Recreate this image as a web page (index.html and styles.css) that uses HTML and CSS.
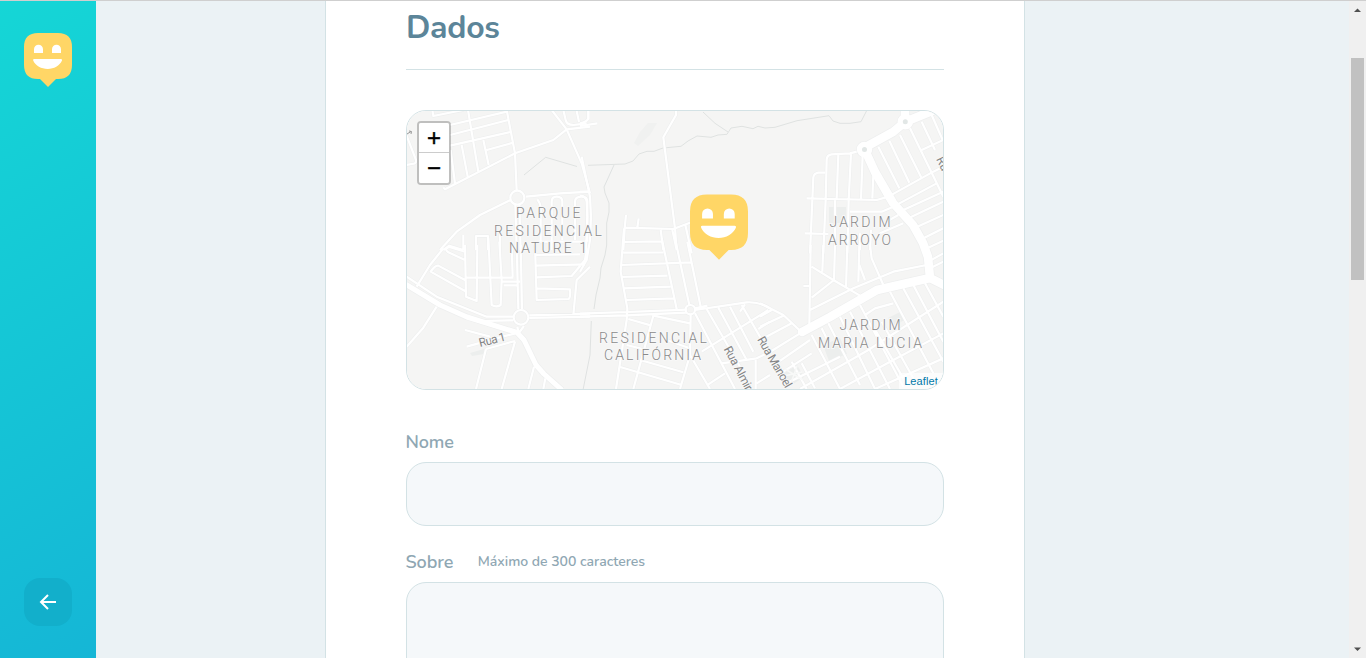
FILE: index.html
```html
<!DOCTYPE html>
<html lang="pt-BR">
<head>
<meta charset="utf-8">
<title>Dados</title>
<link rel="stylesheet" href="styles.css">
</head>
<body>
<div class="app">
  <aside class="sidebar">
    <svg class="logo" width="48" height="54" viewBox="0 0 48 54">
      <path class="pin" d="M14 0H34Q48 0 48 14V32Q48 46 34 46H32L24 54L16 46H14Q0 46 0 32V14Q0 0 14 0Z"/>
      <path class="face" d="M10 20V16.200a4.500 4.500 0 0 1 9 0V20ZM28 20V16.200a4.500 4.500 0 0 1 9 0V20ZM10 26H37Q38.500 26 38 27.600C35.500 33 30 36 23.700 36S11.500 33 9.200 27.600Q8.600 26 10 26Z"/>
    </svg>
    <button class="back" type="button" aria-label="Voltar">
      <svg width="24" height="24" viewBox="0 0 24 24"><path d="M20 12H5M12 19L5 12L12 5"/></svg>
    </button>
  </aside>
  <main class="content">
    <form class="form">
      <h2 class="legend">Dados</h2>
      <div class="map">
        <svg class="map-art" width="536" height="278" viewBox="407 111 536 278">
          <defs>
            <g id="minor">
              <g transform="translate(400 100) scale(.33333)">
                <path d="M97 30L100 48L190 30M150 75L320 35M150 105L325 60M150 137L335 95M260 150L340 128M204 30L235 215M320 30L345 160L350 270M152 150L165 250M185 135L203 230M250 120L266 195M130 262L135 268L345 160L460 120L500 88L570 80M455 30L500 88L545 190L570 280M490 30L497 60Q500 75 520 75L560 70M530 33L537 66M565 30L565 60M15 95L48 180Q50 192 35 192L20 195M378 290L480 280L570 275M332 300L240 345L170 395L120 450M346 315L350 450M358 315L362 450M412 298Q422 310 422 325V425M455 450V305Q455 290 470 290Q487 290 487 305V420M525 420V305Q525 290 545 290Q562 290 562 305V425M405 425H540M190 405V450M228 450V408H264V450M300 400V450M130 450L148 437L190 450"/>
                <circle cx="352" cy="293" r="21"/>
              </g>
              <g transform="translate(400 245) scale(.33333)">
                <path d="M130 10L90 60L50 125M195 45L145 22Q130 12 148 6L195 20M195 105L115 62Q105 60 92 80L195 138M195 0L198 155L230 168L232 0M265 -20L275 180Q290 188 302 180L305 105L298 -10M335 0L338 95M195 98L340 98M305 110H360M312 121H352M350 0L355 192M362 0L366 192M405 0L410 165L505 162Q512 160 510 133L410 130M405 62L555 58M408 97L515 93L555 45M405 30L540 28M560 10L555 45M570 65L530 105L520 210M20 95L110 155L260 215H340M255 228L340 226M388 211L570 206M388 219L570 215M352 245L356 265M372 243L358 262M110 185L70 248L20 305M195 255L270 275M200 305L345 265M258 312L345 288M258 312L228 432M345 290L305 432M402 365L385 432M436 400L430 432"/>
                <circle cx="363" cy="217" r="22"/>
              </g>
              <g transform="translate(580 100) scale(.33333)">
                <path d="M25 30V55Q22 65 0 70M0 78L52 70M288 30V45L250 112L285 385L290 450M138 345L134 385L130 450M176 355L172 383M134 383L280 387L330 368M130 426L248 424M242 390L250 450M277 390L290 450M316 375L335 460M5 170L30 290L33 350L30 420L20 480L0 515M0 275H25M0 287Q18 288 20 305L22 350L18 450M0 425H20"/>
              </g>
              <g transform="translate(580 245) scale(.33333)">
                <path d="M132 -50L122 80L142 190L140 225L108 432M130 23L250 22M125 60L335 52M122 96L262 92M130 130L272 125M140 165L282 160M245 -20L290 192M285 -20L328 180M322 -10L362 185M0 206L140 201L320 194M0 215L140 211L320 203M345 195L500 172Q540 170 570 190M345 190L382 182M145 222L215 242M220 212L330 235M140 300L200 315M220 212L160 432M118 365L305 420M180 345L310 382M260 285L325 308M332 208L330 330L300 432M345 205L465 432M330 330L390 432M380 192L500 400M415 188L500 345M450 185L520 320M485 180L560 310M365 320L565 195M385 418L435 385M425 355L530 340L570 320M527 345V432M530 415L570 390M535 252L570 230M480 200L495 178"/>
                <circle cx="331" cy="194" r="14"/>
              </g>
              <g transform="translate(760 100) scale(.33333)">
                <path d="M290 155L270 160L215 163Q200 165 200 180L197 300L190 460M235 163L230 295M273 160L266 300L262 460M308 165L303 297M340 225L337 295M140 295L350 300L385 290L520 215L550 200M195 218H175Q162 220 160 232L150 460M270 335H365L400 320L530 250M135 400L205 402M355 140L418 265M388 122L448 248M420 105L485 235M450 85L550 290M485 65L525 150M515 45L548 120M485 150L550 120M430 330L550 275M445 355L550 305M462 385L550 345M480 420L550 385M490 450L550 422M360 400L430 370M380 365L415 345M300 400V450M333 390L330 450M225 300V450"/>
              </g>
              <g transform="translate(760 245) scale(.33333)">
                <path d="M152 0L148 240M130 123H150M155 65L220 105L300 152M190 0L187 80M225 0L222 105L155 158M262 0L258 130M298 0L295 110M330 0L335 40L370 120M150 195L280 130L400 80L500 60M298 60L315 105M0 175L70 210L125 262M0 215L35 195M0 245L70 212M0 285L95 235M15 330L125 262M35 365L150 285M70 380L155 325M155 270L240 432M205 235L300 420M240 215L345 432M270 200L390 432M300 180L430 425M340 245L430 400M365 230L460 400M390 140L520 385M430 130L550 350M460 120L550 290M495 115L550 215M315 210L345 190L400 175M120 432L320 318L550 170M80 415L240 335M240 432L400 345L550 265M345 432L550 340M125 355L165 430M95 350L140 432M505 50L550 25M510 70L550 50M185 250L205 290"/>
              </g>
            </g>
            <g id="major">
              <path d="M406 284.500L440 305L467 317L517 332.500L524 340L536 365L544 374L562 390"/>
            </g>
            <g id="avenue">
              <path d="M905 110V121M932 111L905 122L893 132L864 148L875 172L893 203L913 225L923 243L928 257L930 278L944 285M930 278L877 290L830 317L802 332"/>
              <circle cx="864.500" cy="149.500" r="3.500"/>
              <circle cx="905.300" cy="121.700" r="3.500"/>
            </g>
          </defs>
          <rect class="land" x="406" y="110" width="538" height="280"/>
          <path class="park" d="M829 207H846V223H829ZM823 345L840 338L847 354L829 361ZM888 318L900 312L904 320L893 327ZM783 374L797 365L804 377L790 386ZM470 353L484 349V354L472 356Z"/>
          <path class="lake" d="M634 143L640 132L648 123H657L650 135L638 146Z"/>
          <g class="trail">
            <path d="M524 175L545.700 157.300L577 166.500M588 165.300L625 164L633 161L639 154L647 151.300H654L663 148L681 146.300L688 141L697 136L711 137.300L718 135L727 134.300L731 128L742 126.300L753 128.700L758 126.300L765 128L775 127.300L797 120.700L829 115.700L833 121L840 123.300H850L861 121.700L867 110M703 112L715 123.300L728 132M614 165L604 187L605 193L609 203V212L606.700 223V245L605 255L601 268L600 278L596 295L594 309M591.300 321L590 355L583 390"/>
          </g>
          <use class="minor-case" href="#minor"/>
          <use class="major-case" href="#major"/>
          <use class="avenue-case" href="#avenue"/>
          <use class="minor-fill" href="#minor"/>
          <use class="major-fill" href="#major"/>
          <use class="avenue-fill" href="#avenue"/>
          <path class="plaza" d="M785 369L803 380M797 366L790 386M784 376L802 372"/>
          <circle class="dot" cx="864.500" cy="149.500" r="2.500"/>
          <circle class="dot" cx="905.300" cy="121.700" r="2.500"/>
          <g class="district">
            <text x="516" y="218" textLength="66.500">PARQUE</text>
            <text x="494" y="235.500" textLength="110">RESIDENCIAL</text>
            <text x="509" y="253" textLength="80">NATURE 1</text>
            <text x="829.500" y="227" textLength="63">JARDIM</text>
            <text x="828" y="244.500" textLength="65">ARROYO</text>
            <text x="599" y="342.500" textLength="110">RESIDENCIAL</text>
            <text x="604" y="360" textLength="99">CALIFÓRNIA</text>
            <text x="839.500" y="330" textLength="63">JARDIM</text>
            <text x="818" y="347.500" textLength="106">MARIA LUCIA</text>
          </g>
          <g class="street">
            <text transform="translate(480 347) rotate(-14)" textLength="27">Rua 1</text>
            <text transform="translate(723.500 349) rotate(62)" textLength="48">Rua Almir</text>
            <text transform="translate(757 339.500) rotate(60)" textLength="57">Rua Manoel</text>
            <text transform="translate(936 159) rotate(64)">Ru</text>
          </g>
          <path class="mark" d="M407 134L411 131.500M409 131L411.500 131.500L411 134"/>
        </svg>
        <svg class="marker" width="58" height="66" viewBox="0 0 48 54">
          <path class="pin" d="M14 0H34Q48 0 48 14V32Q48 46 34 46H32L24 54L16 46H14Q0 46 0 32V14Q0 0 14 0Z"/>
          <path class="face" d="M10 20V16.200a4.500 4.500 0 0 1 9 0V20ZM28 20V16.200a4.500 4.500 0 0 1 9 0V20ZM10 26H37Q38.500 26 38 27.600C35.500 33 30 36 23.700 36S11.500 33 9.200 27.600Q8.600 26 10 26Z"/>
        </svg>
        <div class="zoom">
          <a class="zoom-btn">+</a>
          <a class="zoom-btn">−</a>
        </div>
        <div class="attribution">Leaflet</div>
      </div>
      <div class="field">
        <label class="label" for="name"><span>Nome</span></label>
        <input class="input" id="name">
      </div>
      <div class="field">
        <label class="label" for="about"><span>Sobre</span><span class="hint">Máximo de 300 caracteres</span></label>
        <textarea class="input area" id="about"></textarea>
      </div>
    </form>
  </main>
  <div class="scrollbar">
    <svg width="17" height="17" viewBox="0 0 17 17"><path d="M5 11L8.500 7.500L12 11Z"/></svg>
    <div class="thumb"></div>
    <svg class="down" width="17" height="17" viewBox="0 0 17 17"><path d="M5 6.500L8.500 10L12 6.500Z"/></svg>
  </div>
</div>
</body>
</html>
```
FILE: styles.css
```css
* { box-sizing: border-box; margin: 0; padding: 0; }
body {
  height: 658px;
  overflow: hidden;
  background: #ebf2f5;
  font-family: Nunito, Lato, sans-serif;
}
.app {
  display: flex;
  height: 658px;
  border-top: 1px solid #cfcfcf;
  overflow: hidden;
}
.sidebar {
  width: 96px;
  padding: 32px 24px;
  display: flex;
  flex-direction: column;
  align-items: center;
  justify-content: space-between;
  background: linear-gradient(329.540deg, #15b6d6 0%, #15d6d6 100%);
}
.pin { fill: #ffd666; }
.face { fill: #fff; }
.back {
  width: 48px;
  height: 48px;
  border: 0;
  border-radius: 16px;
  background: #12afcb;
  display: flex;
  align-items: center;
  justify-content: center;
}
.back path { fill: none; stroke: #fff; stroke-width: 2; }
.content { flex: 1; display: flex; padding-left: 229px; }
.form {
  width: 700px;
  height: 760px;
  padding: 0 80px;
  background: #fff;
  border: 1px solid #d3e2e5;
  border-width: 0 1px;
}
.legend {
  height: 69px;
  padding-top: 6px;
  border-bottom: 1px solid #d3e2e5;
  font-size: 32px;
  line-height: 42px;
  font-weight: 700;
  letter-spacing: -.3px;
  color: #5c8599;
}
.map {
  position: relative;
  height: 280px;
  margin-top: 40px;
  border: 1px solid #d3e2e5;
  border-radius: 20px;
  overflow: hidden;
}
.map-art { display: block; }
.land { fill: #f5f5f4; }
.park { fill: #eceeed; }
.lake { fill: #f0f1f0; }
.plaza { fill: none; stroke: #f8f9f8; stroke-width: 1.5; }
.trail { fill: none; stroke: #dfe2e1; stroke-width: 1; }
.minor-case, .minor-fill, .major-case, .major-fill, .avenue-case, .avenue-fill { fill: none; stroke-linejoin: round; }
.minor-case { stroke: #eeefef; stroke-width: 10; }
.minor-fill { stroke: #fff; stroke-width: 6.500; }
.major-case { stroke: #eeefef; stroke-width: 6.500; }
.major-fill { stroke: #fff; stroke-width: 5; }
.avenue-case { stroke: #eeefef; stroke-width: 10; stroke-linecap: round; }
.avenue-fill { stroke: #fff; stroke-width: 8.500; stroke-linecap: round; }
.dot { fill: #e2e7e6; }
.district text {
  font: 300 14px Roboto, sans-serif;
  letter-spacing: 2px;
  fill: #8a8a8a;
  stroke: #f8f8f8;
  stroke-width: 2;
  paint-order: stroke;
}
.street text {
  font: 400 12px Roboto, sans-serif;
  fill: #858585;
  stroke: #f8f8f8;
  stroke-width: 2;
  paint-order: stroke;
}
.mark { fill: none; stroke: #999; }
.marker { position: absolute; left: 283px; top: 83px; }
.zoom {
  position: absolute;
  left: 10px;
  top: 10px;
  border: 2px solid rgba(0, 0, 0, .22);
  border-radius: 4px;
  background-clip: padding-box;
  overflow: hidden;
}
.zoom-btn {
  display: block;
  width: 30px;
  height: 30px;
  background: #fff;
  font: 24px/29px "Liberation Sans", sans-serif;
  -webkit-text-stroke: .4px #000;
  text-align: center;
  color: #000;
}
.zoom-btn:first-child { border-bottom: 1px solid #ccc; }
.attribution {
  position: absolute;
  right: 0;
  bottom: 0;
  padding: 0 5px;
  background: rgba(255, 255, 255, .7);
  font: 11px/16px "Liberation Sans", sans-serif;
  letter-spacing: .12px;
  color: #0078a8;
}
.field { margin-top: 40px; }
.field + .field { margin-top: 24px; }
.label {
  height: 24px;
  margin: 0 0 8px -.5px;
  display: flex;
  align-items: center;
  gap: 24.5px;
  font-size: 18px;
  line-height: 24px;
  font-weight: 600;
  letter-spacing: -.1px;
  color: #8fa7b3;
}
.hint { font-size: 14px; letter-spacing: -.02px; }
.input {
  display: block;
  width: 100%;
  height: 64px;
  border: 1px solid #d3e2e5;
  border-radius: 20px;
  background: #f5f8fa;
  outline: 0;
}
.area { height: 120px; resize: none; }
.scrollbar {
  width: 17px;
  display: flex;
  flex-direction: column;
  align-items: center;
  background: #f0f0f0;
}
.scrollbar path { fill: #505050; }
.thumb { width: 13px; height: 222px; margin-top: 40px; background: #c1c1c1; }
.down { margin-top: auto; }
```
